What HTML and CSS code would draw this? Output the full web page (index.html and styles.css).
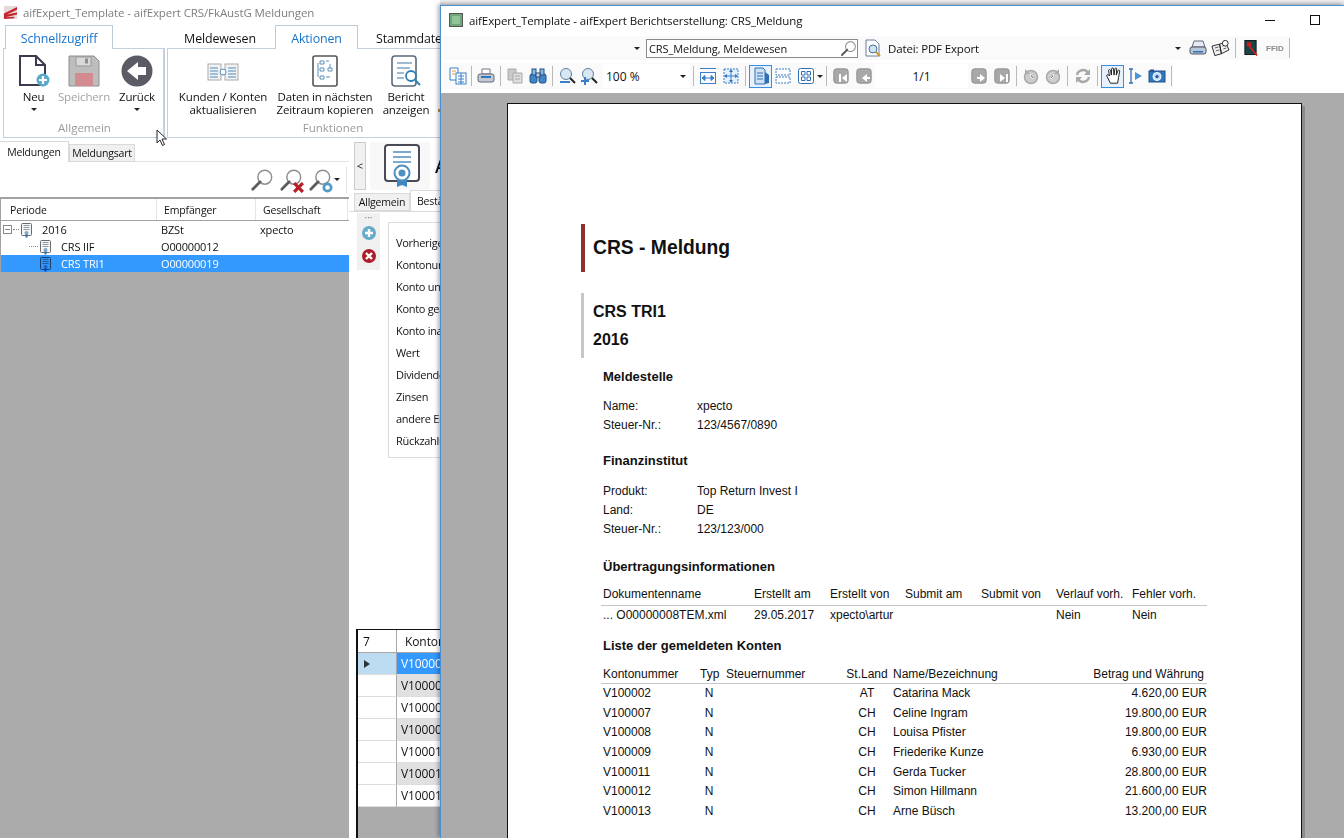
FILE: index.html
```html
<!DOCTYPE html>
<html lang="de">
<head>
<meta charset="utf-8">
<title>aifExpert</title>
<link rel="stylesheet" href="styles.css">
</head>
<body>
<svg class="defs" width="0" height="0">
  <symbol id="mag" viewBox="0 0 26 26"><circle cx="16" cy="10" r="7.500" fill="#fff" stroke="#8f8f8f" stroke-width="1.600"/><path d="M11 15 3 23" stroke="#5c5c5c" stroke-width="3" stroke-linecap="round"/></symbol>
  <symbol id="cert" viewBox="0 0 14 16"><rect x="1.500" y="1.500" width="10" height="12" rx="1" fill="#f6f6f6" stroke="#6a6a6a"/><path d="M3.500 3.500h6M3.500 5.500h6M3.500 7.500h6" stroke="#8f9aa5"/><circle cx="6.500" cy="11" r="2" fill="#7fa8c9"/><path d="M5.500 12.500h2V15.500h-2z" fill="#2f6fae"/></symbol>
  <symbol id="disc" viewBox="0 0 20 20"><rect x="2" y="2" width="16" height="16" rx="3" fill="#a8a8a8" stroke="#8a8a8a"/></symbol>
</svg>

<div class="desk">
  <section class="win-main">
    <header class="main-title">
      <svg class="app-logo" viewBox="0 0 16 16"><rect x="1" y="1" width="14" height="14" fill="#e8d8d8"/><path d="M1 9 15 2v3L4 10l11-2v2L3 13l9-.5v1.500L1 15z" fill="#c4262e"/></svg>
      <span>aifExpert_Template - aifExpert CRS/FkAustG Meldungen</span>
    </header>
    <nav class="rib-tabs">
      <span class="rt rt-a rt-quick">Schnellzugriff</span>
      <span class="rt rt-mw">Meldewesen</span>
      <span class="rt rt-a rt-ak">Aktionen</span>
      <span class="rt rt-st">Stammdaten</span>
    </nav>
    <div class="ribbon">
      <div class="rgroup rg1">
        <div class="rbtns">
          <div class="rb rb-neu">
            <svg class="ri" viewBox="0 0 32 32"><path d="M2 1h16l9 9v20H2z" fill="#fff" stroke="#3b3b4f" stroke-width="2"/><path d="M18 1v9h9" fill="none" stroke="#3b3b4f" stroke-width="2"/><circle cx="25" cy="25" r="6.500" fill="#59a9c9"/><path d="M25 21v8M21 25h8" stroke="#fff" stroke-width="2.200"/></svg>
            <span>Neu</span><i class="caret"></i>
          </div>
          <div class="rb rb-sp dim">
            <svg class="ri" viewBox="0 0 32 32"><path d="M1 1h25l5 5v25H1z" fill="#bdbdbd" stroke="#8e8e8e"/><path d="M8 2h15v9H8z" fill="#d9d9d9" stroke="#999"/><rect x="17" y="3.500" width="3" height="5" fill="#8e8e8e"/><rect x="7" y="18" width="18" height="13" fill="#d48b8f"/></svg>
            <span>Speichern</span>
          </div>
          <div class="rb rb-zu">
            <svg class="ri" viewBox="0 0 32 32"><circle cx="16" cy="16" r="15.500" fill="#5b5b66"/><path d="M6 16 17 7v5h8v8h-8v5z" fill="#fff"/></svg>
            <span>Zurück</span><i class="caret"></i>
          </div>
        </div>
        <div class="rlabel">Allgemein</div>
      </div>
      <div class="rgroup rg2">
        <div class="rbtns">
          <div class="rb rb-ku">
            <svg class="ri ri-wide" viewBox="0 0 32 20"><rect x="1" y="2" width="13" height="16" fill="#f2f2f2" stroke="#aaa"/><rect x="18" y="2" width="13" height="16" fill="#f2f2f2" stroke="#aaa"/><path d="M3 6h8M3 9h8M3 12h8M3 15h8M21 6h8M21 9h8M21 12h8M21 15h8" stroke="#4d8fc0"/><circle cx="16" cy="10" r="3" fill="#fff" stroke="#4d8fc0"/></svg>
            <span>Kunden / Konten<br>aktualisieren</span>
          </div>
          <div class="rb rb-da">
            <svg class="ri" viewBox="0 0 28 32"><rect x="2" y="1" width="24" height="30" rx="2" fill="#fff" stroke="#555" stroke-width="1.600"/><path d="M9 6h4v3H9zM15 6h3M9 13h4v3H9zM17 13h4v3h-4zM9 21h4v3H9zM15 22h4M7 8v14M19 9v4" fill="none" stroke="#5a8fb8"/></svg>
            <span>Daten in nächsten<br>Zeitraum kopieren</span>
          </div>
          <div class="rb rb-be">
            <svg class="ri" viewBox="0 0 32 32"><rect x="2" y="1" width="24" height="30" rx="3" fill="#fff" stroke="#5a6a7a" stroke-width="1.600"/><path d="M7 8h15M7 13h13M7 18h7M7 23h7" stroke="#7da6c6" stroke-width="1.400"/><circle cx="21" cy="21" r="5" fill="#fff" stroke="#2c7fb8" stroke-width="1.800"/><path d="m25 25 5 5" stroke="#2c7fb8" stroke-width="2"/></svg>
            <span>Bericht<br>anzeigen</span>
          </div>
          <i class="rb-dot"></i>
        </div>
        <div class="rlabel">Funktionen</div>
      </div>
    </div>

    <div class="work">
      <div class="left">
        <div class="subtabs">
          <span class="st st-on">Meldungen</span>
          <span class="st">Meldungsart</span>
        </div>
        <div class="searchbar">
          <svg class="sb"><use href="#mag"/></svg>
          <span class="sb-x">
            <svg class="sb"><use href="#mag"/></svg>
            <svg class="sb-badge" viewBox="0 0 10 10"><path d="m1 1 8 8M9 1 1 9" stroke="#b8202a" stroke-width="3"/></svg>
          </span>
          <span class="sb-x">
            <svg class="sb"><use href="#mag"/></svg>
            <svg class="sb-badge" viewBox="0 0 12 12"><circle cx="6" cy="6" r="4" fill="#fff" stroke="#4f9cc9" stroke-width="3"/></svg>
          </span>
          <i class="caret caret-sb"></i>
          <i class="sb-line"></i>
        </div>
        <div class="tree">
          <div class="tree-head"><span class="c1">Periode</span><span class="c2">Empfänger</span><span class="c3">Gesellschaft</span></div>
          <div class="tr">
            <span class="t1 lvl0"><i class="exp"></i><i class="dots"></i><svg class="ti"><use href="#cert"/></svg><span>2016</span></span>
            <span class="t2">BZSt</span><span class="t3">xpecto</span>
          </div>
          <div class="tr">
            <span class="t1 lvl1"><i class="dots"></i><svg class="ti"><use href="#cert"/></svg><span>CRS IIF</span></span>
            <span class="t2">O00000012</span><span class="t3"></span>
          </div>
          <div class="tr tr-sel">
            <span class="t1 lvl1"><i class="dots"></i><svg class="ti"><use href="#cert"/></svg><span>CRS TRI1</span></span>
            <span class="t2">O00000019</span><span class="t3"></span>
          </div>
        </div>
      </div>

      <div class="right">
        <div class="detail-head">
          <button class="collapse">&lt;</button>
          <div class="detail-icon">
            <svg viewBox="0 0 36 44" class="cert-big"><rect x="1" y="1" width="34" height="36" rx="3" fill="#fff" stroke="#4a4a55" stroke-width="2"/><path d="M9 8h18M9 13h18M9 18h18" stroke="#4f8fc0" stroke-width="1.600"/><path d="M13 34h10v9l-5-2-5 2z" fill="#3f86c0"/><circle cx="18" cy="29" r="7.500" fill="#fff" stroke="#4f8fc0" stroke-width="2"/><circle cx="18" cy="29" r="3.500" fill="#4f8fc0"/></svg>
          </div>
          <span class="detail-title">A</span>
        </div>
        <div class="dtabs"><span class="dt">Allgemein</span><span class="dt dt-on">Bestände</span></div>
        <div class="dpanel">
          <div class="dbtns">
            <span class="grip">···</span>
            <svg class="dbi" viewBox="0 0 16 16"><circle cx="8" cy="8" r="7" fill="#66abc9"/><path d="M8 4v8M4 8h8" stroke="#fff" stroke-width="2.400"/></svg>
            <svg class="dbi" viewBox="0 0 16 16"><circle cx="8" cy="8" r="7" fill="#ab1f2a"/><path d="m5 5 6 6M11 5l-6 6" stroke="#fff" stroke-width="2.400"/></svg>
          </div>
          <div class="dbox">
            <div>Vorherige Periode</div><div>Kontonummer</div><div>Konto unverändert</div><div>Konto geändert</div><div>Konto inaktiv</div><div>Wert</div><div>Dividenden</div><div>Zinsen</div><div>andere Erträge</div><div>Rückzahlungen</div>
          </div>
        </div>
        <div class="mini-grid">
          <div class="mg-r mg-head"><span class="mg-h">7</span><span class="mg-c mg-ch">Kontonummer</span></div>
          <div class="mg-r"><span class="mg-h mg-hsel"><i class="tri"></i></span><span class="mg-c mg-sel">V100002</span></div>
          <div class="mg-r"><span class="mg-h"></span><span class="mg-c mg-alt">V100007</span></div>
          <div class="mg-r"><span class="mg-h"></span><span class="mg-c">V100008</span></div>
          <div class="mg-r"><span class="mg-h"></span><span class="mg-c mg-alt">V100009</span></div>
          <div class="mg-r"><span class="mg-h"></span><span class="mg-c">V100011</span></div>
          <div class="mg-r"><span class="mg-h"></span><span class="mg-c mg-alt">V100012</span></div>
          <div class="mg-r"><span class="mg-h"></span><span class="mg-c">V100013</span></div>
        </div>
      </div>
    </div>
  </section>

  <svg class="cursor" viewBox="0 0 12 18"><path d="M1 1v13l3-3 2.500 5.500 2-1L6 10h4.500z" fill="#fff" stroke="#222"/></svg>

  <section class="win-report">
    <header class="rep-title">
      <svg class="rep-logo" viewBox="0 0 14 14"><rect x=".5" y=".5" width="13" height="13" fill="#6fa878" stroke="#555"/><rect x="3" y="3" width="8" height="8" fill="#8fc49a"/></svg>
      <span class="rep-name">aifExpert_Template - aifExpert Berichtserstellung: CRS_Meldung</span>
      <i class="win-min"></i>
      <i class="win-max"></i>
    </header>
    <div class="tb1">
      <i class="caret tb1-caret"></i>
      <div class="search"><span>CRS_Meldung, Meldewesen</span><svg class="search-i"><use href="#mag"/></svg></div>
      <svg class="t-i t1-doc" viewBox="0 0 18 18"><path d="M2 1h9l4 4v12H2z" fill="#fff" stroke="#6b7f99"/><circle cx="9" cy="10" r="4" fill="#cfe3f2" stroke="#4a6f9a"/><path d="m12 13 4 4" stroke="#c89a2c" stroke-width="2"/></svg>
      <span class="t1-export">Datei: PDF Export</span>
      <i class="caret t1-caret2"></i>
      <svg class="t-i t1-print" viewBox="0 0 18 18"><path d="M5 2h9l2 6H3z" fill="#e6ebf2" stroke="#667"/><rect x="1" y="8" width="16" height="7" rx="2" fill="#b8c8dc" stroke="#556"/><rect x="4" y="12" width="10" height="1.500" fill="#2f6fb0"/></svg>
      <svg class="t-i t1-book" viewBox="0 0 20 18"><path d="M1 7 9 5l2 10-7 2zM9 5l6-2 4 8-8 4z" fill="#f3f3f3" stroke="#222"/><path d="M4 9l4-1M5 12l4-1M12 7l3-1M13 10l3-1" stroke="#555"/><circle cx="15" cy="4" r="3" fill="#fff" stroke="#222"/></svg>
      <i class="sep t1-sep"></i>
      <svg class="t-i t1-red" viewBox="0 0 16 18"><rect x="2" y="1" width="12" height="15" fill="#16424a" stroke="#111"/><path d="m5 5 10 12" stroke="#e01818" stroke-width="1.600"/><rect x="4" y="3" width="5" height="4" fill="#d01818"/></svg>
      <span class="ffid">FFID</span>
      <i class="sep"></i>
    </div>
    <div class="tb2">
      <svg class="ic" viewBox="0 0 18 18"><path d="M1 1h8v12H1z" fill="#fff" stroke="#3a7fc8"/><rect x="7" y="6" width="10" height="11" fill="#fff" stroke="#3a7fc8"/><path d="M9 9h6M9 12h6M9 15h6M12 6v11" stroke="#3a7fc8"/><path d="M3 4h4M3 7h3" stroke="#e0a040"/></svg>
      <i class="sep sep-a"></i>
      <svg class="ic" viewBox="0 0 18 18"><path d="M5 2h8v5H5z" fill="#fff" stroke="#778"/><rect x="1" y="7" width="16" height="8" rx="2" fill="#c3c9d2" stroke="#667"/><rect x="4" y="9" width="10" height="2" fill="#2f78c0"/></svg>
      <i class="sep"></i>
      <svg class="ic" viewBox="0 0 18 18"><path d="M2 2h8v11H2z" fill="#c9c9c9" stroke="#aaa"/><path d="M7 6h9v10H7z" fill="#ddd" stroke="#aaa"/><path d="M9 9h5M9 12h5" stroke="#aaa"/></svg>
      <svg class="ic ic-m" viewBox="0 0 18 18"><rect x="1" y="7" width="7" height="9" rx="2" fill="#3f86c8" stroke="#1f4f86"/><rect x="10" y="7" width="7" height="9" rx="2" fill="#3f86c8" stroke="#1f4f86"/><rect x="3" y="2" width="4" height="6" fill="#8fb8dc" stroke="#1f4f86"/><rect x="11" y="2" width="4" height="6" fill="#8fb8dc" stroke="#1f4f86"/><rect x="7" y="6" width="4" height="4" fill="#ccd" stroke="#1f4f86"/></svg>
      <i class="sep"></i>
      <svg class="ic" viewBox="0 0 18 18"><circle cx="8" cy="7" r="5.500" fill="#d7e7f4" stroke="#5f7f9f"/><path d="m12 11 5 5" stroke="#222" stroke-width="2"/><path d="M2 15h10" stroke="#3a7fc8" stroke-width="2"/></svg>
      <svg class="ic" viewBox="0 0 18 18"><circle cx="8" cy="7" r="5.500" fill="#d7e7f4" stroke="#5f7f9f"/><path d="m12 11 5 5" stroke="#222" stroke-width="2"/><path d="M1 14h8M5 10v8" stroke="#3a7fc8" stroke-width="2"/></svg>
      <div class="zoom-box"><span>100 %</span><i class="caret"></i></div>
      <i class="sep"></i>
      <svg class="ic" viewBox="0 0 18 18"><path d="M1 1.500h16M1 5.500h16M1 16.500h16" stroke="#3a7fc8"/><path d="M1.500 6v10M16.500 6v10" stroke="#3a7fc8"/><path d="M3 11h12M3 11l3-2.500v5zM15 11l-3-2.500v5z" stroke="#3a7fc8" fill="#3a7fc8"/></svg>
      <svg class="ic ic-m" viewBox="0 0 18 18"><rect x="2" y="2" width="14" height="14" fill="#e4f0fa" stroke="#3a7fc8" stroke-dasharray="2 1"/><path d="M9 3v12M3 9h12" stroke="#3a7fc8"/><path d="m9 2 2 3H7zM9 16l2-3H7zM2 9l3 2V7zM16 9l-3 2V7z" fill="#2f78c0"/></svg>
      <i class="sep"></i>
      <span class="ic-sel">
        <svg class="ic" viewBox="0 0 18 18"><path d="M2 1h8l2 2v14H2z" fill="#cfe2f5" stroke="#2e6fb5"/><path d="M4 6h6M4 9h6M4 12h6" stroke="#2e6fb5"/><path d="M12 5l4 3v8l-4 1z" fill="#2e6fb5"/></svg>
      </span>
      <svg class="ic" viewBox="0 0 18 18"><rect x="2" y="2" width="14" height="6" fill="#fff" stroke="#3a7fc8" stroke-dasharray="2 1"/><rect x="2" y="10" width="14" height="6" fill="#fff" stroke="#3a7fc8" stroke-dasharray="2 1"/></svg>
      <svg class="ic ic-m" viewBox="0 0 18 18"><rect x="1.500" y="1.500" width="15" height="15" rx="2" fill="#fff" stroke="#2e6fb5"/><path d="M4.500 4.500h3.500v3.500H4.500zM10 4.500h3.500v3.500H10zM4.500 10h3.500v3.500H4.500zM10 10h3.500v3.500H10z" fill="none" stroke="#2e6fb5"/></svg>
      <i class="caret caret-v"></i>
      <i class="sep"></i>
      <svg class="ic"><use href="#disc"/><path d="M6 6h2v8H6zM14 6v8L9 10z" fill="#fff" transform="translate(1 1)"/></svg>
      <svg class="ic ic-m"><use href="#disc"/><path d="M7 11l5-4v3h3v2h-3v3z" fill="#fff"/></svg>
      <span class="pageno">1/1</span>
      <svg class="ic"><use href="#disc"/><path d="M15 11l-5-4v3H7v2h3v3z" fill="#fff"/></svg>
      <svg class="ic ic-m"><use href="#disc"/><path d="M7 7v8l5-4zM13 7h2v8h-2z" fill="#fff"/></svg>
      <i class="sep"></i>
      <svg class="ic" viewBox="0 0 18 18"><circle cx="9" cy="10" r="6.500" fill="#ccc" stroke="#aaa" stroke-width="1.500"/><path d="M3 2v5h5z" fill="#aaa"/><path d="M9 7v3l2 2" stroke="#fff"/></svg>
      <svg class="ic" viewBox="0 0 18 18"><circle cx="9" cy="10" r="6.500" fill="#ccc" stroke="#aaa" stroke-width="1.500"/><path d="M15 2v5h-5z" fill="#aaa"/><path d="M9 7v3l-2 2" stroke="#fff"/></svg>
      <i class="sep"></i>
      <svg class="ic ic-m" viewBox="0 0 18 18"><path d="M3 8a6 6 0 0 1 11-2M15 10a6 6 0 0 1-11 2" fill="none" stroke="#a8a8a8" stroke-width="2.500"/><path d="M16 2v6h-6zM2 16v-6h6z" fill="#a8a8a8"/></svg>
      <i class="sep"></i>
      <span class="ic-sel">
        <svg class="ic" viewBox="0 0 18 20"><path d="M5 18 1 10c-.5-1.500 1-2 2-1l1 1-1-6c0-1.500 2-1.500 2.200 0L6 9l.4-7c.2-1.300 2-1.300 2 0L9 9l1-7c.3-1.300 2-1 2 .3L11.500 9l2-5c.5-1.300 2-.8 1.800.6L14 12l-1 6z" fill="#fff" stroke="#111"/></svg>
      </span>
      <svg class="ic" viewBox="0 0 18 18"><path d="M3 2h4M3 16h4M5 2v14" stroke="#2e6fb5" stroke-width="1.300" fill="none"/><path d="m9 5 7 4-7 4z" fill="#4a93d6"/></svg>
      <svg class="ic" viewBox="0 0 18 18"><rect x="1" y="4" width="16" height="11" fill="#2f78c0" stroke="#234f86"/><rect x="2" y="2.500" width="4" height="2" fill="#234f86"/><circle cx="9" cy="9.500" r="4" fill="#bcd9f2" stroke="#fff"/><circle cx="9" cy="9.500" r="1.500" fill="#234f86"/></svg>
      <i class="sep"></i>
    </div>

    <div class="canvas">
      <article class="page">
        <h1 class="rp-h1">CRS - Meldung</h1>
        <div class="rp-h2"><div>CRS TRI1</div><div>2016</div></div>
        <div class="sect">
          <h3 class="rp-h3 h-a">Meldestelle</h3>
          <dl class="kv k-a"><dt>Name:</dt><dd>xpecto</dd><dt>Steuer-Nr.:</dt><dd>123/4567/0890</dd></dl>
          <h3 class="rp-h3 h-b">Finanzinstitut</h3>
          <dl class="kv k-b"><dt>Produkt:</dt><dd>Top Return Invest I</dd><dt>Land:</dt><dd>DE</dd><dt>Steuer-Nr.:</dt><dd>123/123/000</dd></dl>
          <h3 class="rp-h3 h-c">Übertragungsinformationen</h3>
          <div class="xfer x-head"><span>Dokumentenname</span><span>Erstellt am</span><span>Erstellt von</span><span>Submit am</span><span>Submit von</span><span>Verlauf vorh.</span><span>Fehler vorh.</span></div>
          <div class="xfer x-row"><span>... O00000008TEM.xml</span><span>29.05.2017</span><span>xpecto\artur</span><span></span><span></span><span>Nein</span><span>Nein</span></div>
          <h3 class="rp-h3 h-d">Liste der gemeldeten Konten</h3>
          <div class="acc a-head"><span>Kontonummer</span><span>Typ</span><span class="stn">Steuernummer</span><span class="ctr">St.Land</span><span class="nm">Name/Bezeichnung</span><span class="amt amt-h">Betrag und Währung</span></div>
          <div class="acc"><span>V100002</span><span class="ctr">N</span><span></span><span class="ctr">AT</span><span class="nm">Catarina Mack</span><span class="amt">4.620,00 EUR</span></div>
          <div class="acc"><span>V100007</span><span class="ctr">N</span><span></span><span class="ctr">CH</span><span class="nm">Celine Ingram</span><span class="amt">19.800,00 EUR</span></div>
          <div class="acc"><span>V100008</span><span class="ctr">N</span><span></span><span class="ctr">CH</span><span class="nm">Louisa Pfister</span><span class="amt">19.800,00 EUR</span></div>
          <div class="acc"><span>V100009</span><span class="ctr">N</span><span></span><span class="ctr">CH</span><span class="nm">Friederike Kunze</span><span class="amt">6.930,00 EUR</span></div>
          <div class="acc"><span>V100011</span><span class="ctr">N</span><span></span><span class="ctr">CH</span><span class="nm">Gerda Tucker</span><span class="amt">28.800,00 EUR</span></div>
          <div class="acc"><span>V100012</span><span class="ctr">N</span><span></span><span class="ctr">CH</span><span class="nm">Simon Hillmann</span><span class="amt">21.600,00 EUR</span></div>
          <div class="acc"><span>V100013</span><span class="ctr">N</span><span></span><span class="ctr">CH</span><span class="nm">Arne Büsch</span><span class="amt">13.200,00 EUR</span></div>
        </div>
      </article>
    </div>
  </section>
</div>
</body>
</html>
```
FILE: styles.css
```css
* { box-sizing: border-box; }
html, body { margin: 0; height: 100%; overflow: hidden; }
body { font-family: "Open Sans", "Liberation Sans", sans-serif; font-size: 12px; color: #111; background: #ababab; }
.defs { position: absolute; }
i { display: block; font-style: normal; }

.desk { position: relative; width: 1344px; height: 838px; overflow: hidden; background: linear-gradient(#f0f0f0, #dcdcdc) top / 100% 5px no-repeat, #ababab; }

.caret { width: 0; height: 0; border-left: 3px solid transparent; border-right: 3px solid transparent; border-top: 3px solid #222; flex: none; }
.sep { width: 1px; height: 20px; background: #b9b9b9; margin: 0 3px; flex: none; }
.sep-a { margin-left: 2px; }

/* main window */
.win-main { position: absolute; left: 0; top: 0; width: 440px; height: 838px; background: #fff; overflow: hidden; display: flex; flex-direction: column; }
.main-title { height: 25px; display: flex; align-items: center; padding-left: 3px; gap: 5px; color: #7f7f7f; font-size: 11.500px; letter-spacing: -.1px; flex: none; white-space: nowrap; }
.app-logo { width: 15px; height: 15px; flex: none; }
.rib-tabs { height: 23px; display: flex; position: relative; z-index: 1; flex: none; font-size: 12.400px; letter-spacing: -.1px; }
.rt { display: flex; align-items: center; justify-content: center; height: 24px; flex: none; padding-top: 2px; }
.rt-a { background: #fff; border: 1px solid #bccbdc; border-bottom: 0; color: #1573c9; }
.rt-quick { width: 108px; margin-left: 5px; }
.rt-mw { margin-left: 70px; width: 74px; }
.rt-ak { margin-left: 18px; width: 83px; }
.rt-st { margin-left: 18px; white-space: nowrap; justify-content: flex-start; }
.ribbon { height: 90px; margin-left: 3px; display: flex; flex: none; }
.rgroup { border: 1px solid #c3d0df; border-right: 0; display: flex; flex-direction: column; flex: none; }
.rg1 { width: 162px; padding-left: 7px; border-right: 2px solid #c3d0df; }
.rg2 { margin-left: 2px; padding-left: 5px; width: 273px; }
.rbtns { display: flex; height: 71px; line-height: 13px; text-align: center; font-size: 11.500px; letter-spacing: -.15px; flex: none; }
.rb { display: flex; flex-direction: column; align-items: center; white-space: nowrap; flex: none; }
.rb span { display: block; margin-top: 3px; }
.rb .caret { margin-top: 5px; }
.ri { width: 32px; height: 32px; margin-top: 6px; display: block; flex: none; }
.ri-wide { height: 20px; margin: 13px 0 5px; }
.rb-neu { width: 45px; }
.rb-sp { width: 56px; }
.rb-zu { width: 50px; }
.rb-ku { width: 100px; }
.rb-da { width: 104px; }
.rb-be { width: 52px; margin-left: 3px; }
.rb-dot { width: 2px; height: 3px; margin: 60px 0 0 6px; background: #d98a2c; flex: none; }
.dim { color: #a3a3a3; }
.rlabel { text-align: center; color: #9a9a9a; font-size: 11.500px; line-height: 16px; }
.rg1 .rlabel { padding-right: 5px; }
.rg2 .rlabel { padding-left: 53px; }

.work { flex: 1; display: flex; min-height: 0; }
.left { width: 349px; display: flex; flex-direction: column; background: #ababab; flex: none; }
.subtabs { height: 24px; padding-top: 4px; background: #fff; display: flex; flex: none; font-size: 10.500px; letter-spacing: -.2px; border-bottom: 1px solid #e4e4e4; }
.st { width: 66px; height: 18px; margin-top: 2px; background: #f0f0f0; border: 1px solid #d9d9d9; display: flex; align-items: center; justify-content: center; flex: none; }
.st-on { width: 69px; height: 21px; margin-top: -1px; background: #fff; border-bottom: 0; border-left: 0; }
.searchbar { height: 35px; background: #fff; display: flex; align-items: center; padding-left: 250px; flex: none; }
.sb { width: 24px; height: 24px; display: block; flex: none; }
.sb-x { position: relative; display: block; margin-left: 5px; width: 24px; height: 24px; flex: none; }
.sb-badge { position: absolute; right: -1px; bottom: -1px; width: 11px; height: 11px; }
.caret-sb { margin-left: 2px; }
.sb-line { width: 1px; height: 26px; background: #e0e0e0; margin-left: 6px; flex: none; }
.tree { border-top: 2px solid #a2a2a2; border-left: 1px solid #a2a2a2; flex: none; }
.tree-head { height: 22px; background: #fff; display: flex; align-items: center; border-bottom: 1px solid #a2a2a2; font-size: 10.500px; letter-spacing: -.15px; }
.tree-head span { height: 100%; display: flex; align-items: center; border-right: 1px solid #e4e4e4; padding-left: 9px; flex: none; }
.tree-head .c1 { width: 156px; }
.tree-head .c2 { width: 99px; padding-left: 7px; }
.tree-head .c3 { width: 92px; padding-left: 7px; }
.tr { height: 17px; display: flex; align-items: center; background: #fff; font-size: 11px; letter-spacing: -.15px; }
.tr-sel { background: #3399ff; color: #fff; }
.tr-sel .ti { mix-blend-mode: multiply; }
.t1 { width: 160px; display: flex; align-items: center; flex: none; }
.t2 { width: 99px; flex: none; }
.lvl0 { padding-left: 2px; }
.lvl1 { padding-left: 27px; }
.exp { width: 9px; height: 9px; border: 1px solid #888; background: linear-gradient(#888, #888) center / 5px 1px no-repeat #fff; flex: none; }
.dots { width: 6px; border-top: 1px dotted #888; margin: 0 1px; flex: none; }
.lvl1 .dots { width: 9px; }
.ti { width: 14px; height: 16px; flex: none; }
.t1 > span { margin-left: 8px; }

.right { flex: 1; background: #fff; display: flex; flex-direction: column; min-width: 0; white-space: nowrap; }
.detail-head { height: 55px; display: flex; align-items: center; padding-left: 5px; flex: none; }
.collapse { width: 12px; height: 48px; border: 1px solid #ccc; background: #f0f0f0; padding: 0; font: 11px "Open Sans", sans-serif; color: #222; flex: none; }
.detail-icon { margin-left: 4px; width: 60px; height: 48px; background: #f8f8f8; padding: 2px 0 0 14px; flex: none; }
.cert-big { width: 36px; height: 44px; display: block; }
.detail-title { margin-left: 5px; font-size: 18px; font-weight: 600; }
.dtabs { height: 18px; display: flex; padding-left: 5px; flex: none; font-size: 10.500px; letter-spacing: -.2px; }
.dt { width: 56px; background: #f0f0f0; border: 1px solid #d9d9d9; display: flex; align-items: center; justify-content: center; flex: none; }
.dt-on { background: #fff; height: 21px; margin-top: -3px; border-bottom: 0; padding-left: 6px; justify-content: flex-start; width: 80px; }
.dpanel { height: 418px; display: flex; align-items: flex-start; border-top: 1px solid #d9d9d9; padding: 1px 0 0 8px; flex: none; }
.dbtns { width: 23px; height: 57px; background: #f0f0f0; display: flex; flex-direction: column; align-items: center; flex: none; }
.grip { height: 11px; line-height: 8px; color: #888; font-size: 10px; }
.dbi { width: 16px; height: 16px; margin-top: 7px; flex: none; }
.dbtns .grip + .dbi { margin-top: 1px; }
.dbox { margin: 9px 0 0 8px; width: 200px; height: 236px; border: 1px solid #dcdcdc; padding: 9px 7px; font-size: 11px; letter-spacing: -.3px; flex: none; }
.dbox div { height: 22px; line-height: 22px; }
.mini-grid { flex: 1; margin-left: 7px; background: #ababab; border-left: 2px solid #111; border-top: 1px solid #111; min-height: 0; font-size: 12px; }
.mg-r { height: 22px; display: flex; }
.mg-head { height: 23px; }
.mg-h { width: 39px; background: #fff; border-bottom: 1px solid #ddd; border-right: 1px solid #a8a8a8; display: flex; align-items: center; padding-left: 5px; flex: none; }
.mg-head .mg-h { border-bottom: 1px solid #a8a8a8; }
.mg-hsel { background: #bbdcf2; }
.tri { width: 0; height: 0; border-left: 6px solid #333; border-top: 4.500px solid transparent; border-bottom: 4.500px solid transparent; margin-left: 1px; }
.mg-c { flex: 1; background: #fff; padding-left: 4px; border-bottom: 1px solid #ddd; display: flex; align-items: center; letter-spacing: -.1px; }
.mg-ch { border-bottom: 1px solid #a8a8a8; padding-left: 8px; }
.mg-sel { background: #3399ff; color: #fff; }
.mg-alt { background: #e0e0e0; }

.cursor { position: absolute; left: 156px; top: 129px; width: 12px; height: 18px; }

/* report window */
.win-report { position: absolute; left: 440px; top: 5px; width: 904px; height: 833px; background: #fff; border-top: 1px solid #4a90d9; border-left: 1px solid #4a90d9; box-shadow: -2px -1px 4px rgba(0, 0, 0, .3); display: flex; flex-direction: column; overflow: hidden; }
.rep-title { height: 28px; display: flex; align-items: center; padding-left: 8px; flex: none; }
.rep-logo { width: 14px; height: 14px; display: block; flex: none; }
.rep-name { margin-left: 6px; font-size: 11.500px; letter-spacing: -.1px; white-space: nowrap; }
.win-min { width: 10px; height: 1px; background: #111; margin-left: auto; margin-right: 35px; flex: none; }
.win-max { width: 10px; height: 10px; border: 1px solid #111; margin-right: 24px; flex: none; }
.tb1 { height: 24px; margin: 2px 0 0 2px; display: flex; align-items: center; flex: none; background: #fafafa; width: 847px; padding-left: 191px; }
.tb1-caret { margin-right: 3px; }
.search { width: 212px; height: 19px; border: 1px solid #8a8a8a; background: #fff; display: flex; align-items: center; padding-left: 2px; justify-content: space-between; font-size: 11px; letter-spacing: -.08px; margin-left: 3px; flex: none; white-space: nowrap; }
.search-i { width: 17px; height: 17px; flex: none; }
.t-i { display: block; flex: none; }
.t1-doc { width: 18px; height: 18px; margin-left: 6px; }
.t1-export { margin-left: 6px; width: 287px; font-size: 11.500px; letter-spacing: -.15px; flex: none; }
.t1-print { width: 18px; height: 18px; margin-left: 8px; }
.t1-book { width: 19px; height: 18px; margin-left: 4px; }
.t1-sep { margin-left: 5px; }
.t1-red { width: 15px; height: 18px; margin-left: 4px; }
.ffid { font: 700 8px "Liberation Sans", sans-serif; color: #8b8b8b; margin-left: 8px; margin-right: 2px; flex: none; }
.tb2 { height: 26px; margin: 3px 0 0 2px; display: flex; align-items: center; width: 730px; background: #fafafa; padding-left: 4px; flex: none; }
.ic { width: 18px; height: 18px; margin: 0 2px; display: block; flex: none; }
.ic-m { margin-left: 3px; }
.ic-sel { display: block; width: 23px; height: 23px; border: 1px solid #3a8ee0; background: #e6f1fb; padding: 1.500px 0 0 .5px; flex: none; }
.zoom-box { width: 87px; height: 24px; background: #fff; display: flex; align-items: center; justify-content: space-between; padding: 0 4px 0 3px; margin-left: 3px; font-size: 12px; flex: none; }
.pageno { width: 93px; height: 24px; background: #fff; display: flex; align-items: center; justify-content: center; font-size: 12px; flex: none; }
.canvas { flex: 1; margin-top: 4px; background: #ababab; padding: 10px 0 0 66px; min-height: 0; }
.page { width: 795px; height: 900px; background: #fff; border: 1px solid #111; box-shadow: 3px 3px 0 #8c8c8c; padding: 120px 94px 0 73px; font-family: "Liberation Sans", Arial, sans-serif; color: #111; }

/* report content */
.rp-h1 { margin: 0; height: 48px; border-left: 4px solid #8b2f2f; padding-left: 8px; font-size: 19.300px; font-weight: 700; line-height: 48px; }
.rp-h2 { margin-top: 21px; border-left: 3px solid #c6c6c6; padding: 5px 0 4px 9px; font-size: 16px; font-weight: 700; line-height: 28px; }
.sect { padding-left: 20px; font-size: 12px; }
.rp-h3 { margin: 0; font-size: 13px; font-weight: 700; line-height: 18px; padding-left: 2px; }
.h-a { margin-top: 10px; }
.h-b { margin-top: 17px; }
.h-c { margin-top: 19px; }
.h-d { margin-top: 12px; }
.kv { margin: 0; display: grid; grid-template-columns: 94px 1fr; grid-auto-rows: 19px; line-height: 19px; padding-left: 2px; }
.kv dt, .kv dd { margin: 0; }
.k-a { margin-top: 11px; }
.k-b { margin-top: 12px; }
.xfer { display: grid; grid-template-columns: 151px 76px 75px 76px 75px 76px 1fr; padding-left: 2px; line-height: 19px; }
.x-head { margin-top: 9px; border-bottom: 1px solid #c6c6c6; height: 21px; }
.x-row { height: 19px; }
.acc { display: grid; grid-template-columns: 97px 18px 128px 42px 5px 1fr; height: 19.670px; line-height: 19px; padding-left: 2px; }
.acc > .stn { padding-left: 8px; white-space: nowrap; }
.acc > .nm { grid-area: 1 / 6; }
.acc > .amt { grid-area: 1 / 6; justify-self: end; }
.a-head { margin-top: 10px; border-bottom: 1px solid #c6c6c6; height: 19px; }
.ctr { text-align: center; }
.amt-h { margin-right: 3px; }
```
